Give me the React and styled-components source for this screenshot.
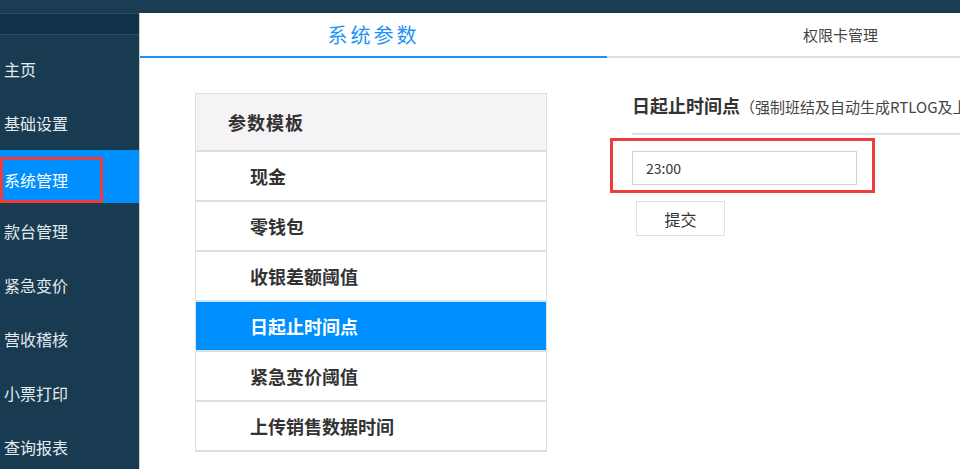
import React from "react";
import styled, { createGlobalStyle, css } from "styled-components";

const FONT = `"Noto Sans CJK SC", "Noto Sans", "Liberation Sans", sans-serif`;

const colors = {
  top: "#1b3c53",
  sidebar: "#193b51",
  strip: "#12324a",
  stripLine: "#2c4c62",
  blue: "#008ffe",
  tabBlue: "#1e93f5",
  border: "#dedede",
  text: "#333",
  red: "#ee3b3b",
};

const menu = ["主页", "基础设置", "系统管理", "款台管理", "紧急变价", "营收稽核", "小票打印", "查询报表"];
const params = ["现金", "零钱包", "收银差额阈值", "日起止时间点", "紧急变价阈值", "上传销售数据时间"];

const GlobalStyle = createGlobalStyle`
  body {
    margin: 0;
    overflow: hidden;
    font-family: ${FONT};
    background: #fff;
  }
`;

const App = () => (
  <>
    <GlobalStyle />
    <Page>
      <TopBar />
      <Main>
        <Sidebar>
          <SideStrip />
          {menu.map((item) => (
            <MenuItem key={item} active={item === "系统管理"}>
              <MenuLabel marked={item === "系统管理"}>{item}</MenuLabel>
            </MenuItem>
          ))}
        </Sidebar>
        <Content>
          <Tabs>
            <Tab active>系统参数</Tab>
            <Tab>权限卡管理</Tab>
          </Tabs>
          <Body>
            <ParamList>
              <ListHeader>参数模板</ListHeader>
              {params.map((p) => (
                <ListRow key={p} active={p === "日起止时间点"}>
                  {p}
                </ListRow>
              ))}
            </ParamList>
            <Detail>
              <DetailTitle>
                日起止时间点
                <TitleNote>（强制班结及自动生成RTLOG及上传数据时间点）</TitleNote>
              </DetailTitle>
              <Highlight>
                <TimeInput defaultValue="23:00" />
              </Highlight>
              <SubmitButton>提交</SubmitButton>
            </Detail>
          </Body>
        </Content>
      </Main>
    </Page>
  </>
);

const Page = styled.div`
  width: 960px;
  height: 469px;
  display: flex;
  flex-direction: column;
  overflow: hidden;
`;

const TopBar = styled.div`
  height: 13px;
  flex-shrink: 0;
  background: ${colors.top};
`;

const Main = styled.div`
  flex: 1;
  display: flex;
  min-height: 0;
`;

const Sidebar = styled.div`
  width: 139px;
  flex-shrink: 0;
  background: ${colors.sidebar};
  border-right: 1px solid #c8ced3;
  display: flex;
  flex-direction: column;
  overflow: hidden;
`;

const SideStrip = styled.div`
  height: 20px;
  flex-shrink: 0;
  background: ${colors.strip};
  border-top: 1px solid ${colors.stripLine};
  border-bottom: 1px solid ${colors.stripLine};
  margin-bottom: 7px;
`;

const MenuItem = styled.div`
  height: 54px;
  flex-shrink: 0;
  display: flex;
  align-items: center;
  color: #e4eaee;
  font-size: 16px;
  ${({ active }) =>
    active &&
    css`
      background: ${colors.blue};
      color: #fff;
      height: 53px;
      margin-bottom: 1px;
    `}
`;

const MenuLabel = styled.span`
  padding-left: 4px;
  ${({ marked }) =>
    marked &&
    css`
      align-self: flex-end;
      height: 40px;
      width: 96px;
      padding-left: 1px;
      display: flex;
      align-items: center;
      border: 3px solid ${colors.red};
    `}
`;

const Content = styled.div`
  flex: 1;
  display: flex;
  flex-direction: column;
  min-width: 0;
`;

const Tabs = styled.div`
  display: flex;
  flex-shrink: 0;
`;

const Tab = styled.div`
  width: 467px;
  flex-shrink: 0;
  height: 43px;
  display: flex;
  align-items: center;
  justify-content: center;
  font-size: 15px;
  color: #444;
  border-bottom: 2px solid #dcdfe3;
  ${({ active }) =>
    active &&
    css`
      font-size: 20px;
      letter-spacing: 3px;
      color: ${colors.tabBlue};
      border-bottom-color: ${colors.tabBlue};
    `}
`;

const Body = styled.div`
  display: flex;
  padding: 35px 0 0 55px;
  gap: 63px;
`;

const ParamList = styled.div`
  width: 350px;
  flex-shrink: 0;
  border: 1px solid ${colors.border};
  border-bottom-width: 2px;
`;

const ListHeader = styled.div`
  height: 56px;
  display: flex;
  align-items: center;
  padding-left: 32px;
  background: #f6f3f6;
  font-size: 18px;
  font-weight: bold;
  color: ${colors.text};
  letter-spacing: 1px;
`;

const ListRow = styled.div`
  height: 48px;
  display: flex;
  align-items: center;
  padding-left: 54px;
  border-top: 2px solid ${colors.border};
  font-size: 18px;
  font-weight: bold;
  color: ${colors.text};
  ${({ active }) =>
    active &&
    css`
      background: ${colors.blue};
      color: #fff;
      border-top-color: #cfe3f5;
    `}
`;

const Detail = styled.div`
  flex: 1;
  min-width: 0;
  display: flex;
  flex-direction: column;
  align-items: flex-start;
`;

const DetailTitle = styled.div`
  align-self: stretch;
  margin-left: 22px;
  padding-bottom: 14px;
  border-bottom: 2px solid #dcdfe5;
  font-size: 18px;
  font-weight: bold;
  color: ${colors.text};
  white-space: nowrap;
  line-height: 24px;
`;

const TitleNote = styled.span`
  font-size: 15px;
  font-weight: normal;
  color: #444;
`;

const Highlight = styled.div`
  margin-top: 3px;
  width: 240px;
  padding: 10px 0 5px 19px;
  border: 3px solid ${colors.red};
`;

const TimeInput = styled.input`
  box-sizing: border-box;
  width: 225px;
  height: 34px;
  padding: 0 13px;
  border: 1px solid #d2d2d2;
  font-family: ${FONT};
  font-size: 14px;
  color: ${colors.text};
  outline: none;
`;

const SubmitButton = styled.button`
  margin: 8px 0 0 26px;
  width: 89px;
  height: 35px;
  background: #fff;
  border: 1px solid #dde2e6;
  font-family: ${FONT};
  font-size: 16px;
  color: ${colors.text};
`;

export default App;
